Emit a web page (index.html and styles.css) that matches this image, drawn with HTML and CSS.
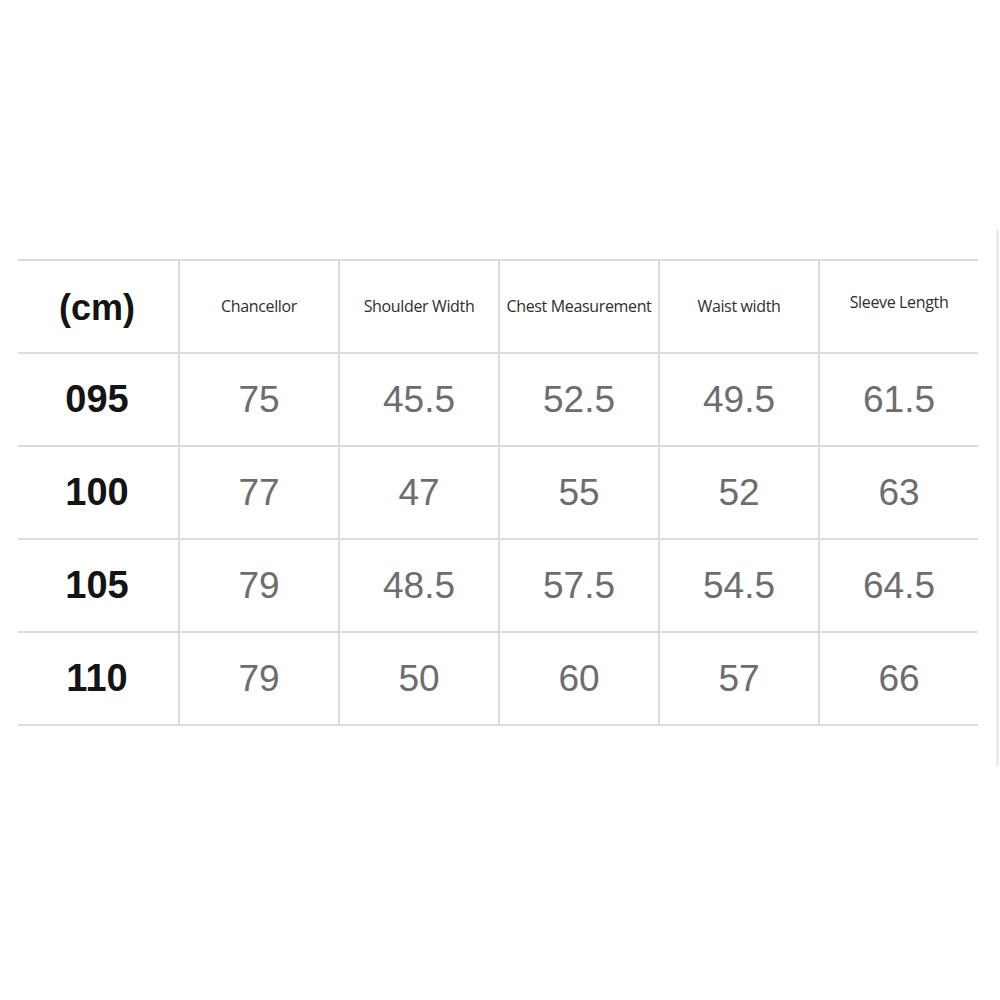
FILE: index.html
```html
<!DOCTYPE html>
<html>
<head>
<meta charset="utf-8">
<link rel="stylesheet" href="styles.css">
</head>
<body>
<div class="page">
  <div class="size-table">
    <div class="cell label unit">(cm)</div>
    <div class="cell head">Chancellor</div>
    <div class="cell head">Shoulder Width</div>
    <div class="cell head">Chest Measurement</div>
    <div class="cell head">Waist width</div>
    <div class="cell head raised">Sleeve Length</div>

    <div class="cell label">095</div>
    <div class="cell val">75</div>
    <div class="cell val">45.5</div>
    <div class="cell val">52.5</div>
    <div class="cell val">49.5</div>
    <div class="cell val">61.5</div>

    <div class="cell label">100</div>
    <div class="cell val">77</div>
    <div class="cell val">47</div>
    <div class="cell val">55</div>
    <div class="cell val">52</div>
    <div class="cell val">63</div>

    <div class="cell label">105</div>
    <div class="cell val">79</div>
    <div class="cell val">48.5</div>
    <div class="cell val">57.5</div>
    <div class="cell val">54.5</div>
    <div class="cell val">64.5</div>

    <div class="cell label last">110</div>
    <div class="cell val last">79</div>
    <div class="cell val last">50</div>
    <div class="cell val last">60</div>
    <div class="cell val last">57</div>
    <div class="cell val last">66</div>
  </div>
  <div class="side-rule"></div>
</div>
</body>
</html>
```

FILE: styles.css
```css
html, body {
  margin: 0;
  padding: 0;
  background: #ffffff;
}

.page {
  display: flex;
  align-items: flex-start;
  padding-left: 18px;
  width: 1000px;
  height: 1000px;
  box-sizing: border-box;
}

.size-table {
  margin-top: 259px;
  display: grid;
  grid-template-columns: repeat(6, 160px);
  grid-auto-rows: 93px;
}

.cell {
  box-sizing: border-box;
  border-top: 2px solid #dcdcdc;
  border-left: 2px solid #dcdcdc;
  display: flex;
  align-items: center;
  justify-content: center;
  font-family: "Liberation Sans", Arial, sans-serif;
}

.cell:nth-child(6n+1) {
  border-left: none;
}

.cell.last {
  height: 95px;
  border-bottom: 2px solid #dcdcdc;
}

.head {
  font-family: "Open Sans", "Noto Sans", sans-serif;
  font-size: 16px;
  letter-spacing: -0.35px;
  color: #2e2e2e;
  padding-bottom: 2px;
}

.head.raised {
  padding-bottom: 9px;
}

.label {
  font-weight: bold;
  font-size: 38px;
  color: #141414;
  padding-right: 2px;
}

.unit {
  font-size: 36px;
  padding-top: 2px;
}

.val {
  font-size: 37px;
  color: #6d6d6d;
}

.side-rule {
  margin-top: 230px;
  margin-left: 18px;
  width: 3px;
  height: 536px;
  background: #ececec;
}
```
